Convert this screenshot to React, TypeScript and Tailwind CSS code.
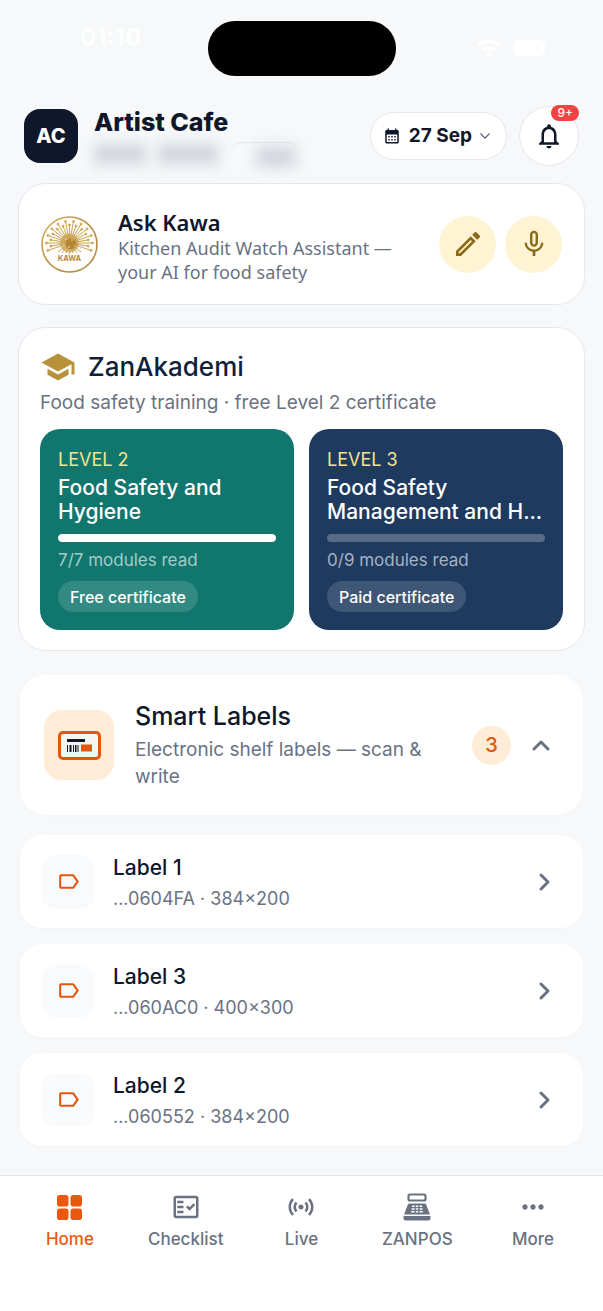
import React from "react";
import {
    MdCalendarMonth,
    MdMicNone,
    MdMoreHoriz,
    MdOutlineEdit,
    MdOutlineFactCheck,
    MdOutlineLabel,
    MdOutlineNotifications,
    MdSchool,
    MdSensors,
} from "react-icons/md";

type Course = {
    level: string;
    title: string;
    read: number;
    total: number;
    badge: string;
    bg: string;
    muted: string;
};

const courses: Course[] = [
    {
        level: "LEVEL 2",
        title: "Food Safety and Hygiene",
        read: 7,
        total: 7,
        badge: "Free certificate",
        bg: "bg-[#10766e]",
        muted: "text-[#a3ccc8]",
    },
    {
        level: "LEVEL 3",
        title: "Food Safety Management and H...",
        read: 0,
        total: 9,
        badge: "Paid certificate",
        bg: "bg-[#1e3a5f]",
        muted: "text-[#a5b1c1]",
    },
];

const labels = [
    { name: "Label 1", info: "...0604FA · 384×200" },
    { name: "Label 3", info: "...060AC0 · 400×300" },
    { name: "Label 2", info: "...060552 · 384×200" },
];

function Chevron({ className, d, width = 3 }: { className: string; d: string; width?: number }) {
    return (
        <svg
            className={className}
            viewBox="0 0 24 24"
            fill="none"
            stroke="currentColor"
            strokeWidth={width}
            strokeLinecap="round"
            strokeLinejoin="round"
            aria-hidden="true"
        >
            <path d={d} />
        </svg>
    );
}

function StatusBar() {
    return (
        <div className="relative flex h-24 justify-center pt-[21px]">
            <span className="absolute left-20 top-6 text-[24px] leading-7 font-bold text-white/80">
                01:10
            </span>
            <div className="h-[55px] w-[188px] rounded-[27px] bg-black" />
            <div className="absolute right-[58px] top-9 flex items-center gap-3 text-white">
                <svg className="h-6 w-6" viewBox="0 0 24 24" fill="none" stroke="currentColor" strokeWidth="4">
                    <path d="M1.500 9.500a15 15 0 0 1 21 0" />
                    <path d="M6 14.500a8.500 8.500 0 0 1 12 0" />
                    <path d="M8.500 18a5 5 0 0 1 7 0L12 22z" fill="currentColor" stroke="none" />
                </svg>
                <div className="h-4 w-8 rounded-md bg-white" />
            </div>
        </div>
    );
}

function KawaLogo() {
    const rays = Array.from({ length: 36 }, (_, i) => {
        const angle = (i * Math.PI * 2) / 36;
        const r = i % 2 ? 19 : 23;
        return {
            x: 28.5 + Math.cos(angle) * r,
            y: 27 + Math.sin(angle) * r * 0.95,
            down: Math.sin(angle) > 0.4,
        };
    }).filter((ray) => !ray.down);

    return (
        <svg className="size-[57px] shrink-0" viewBox="0 0 57 57" role="img" aria-label="Kawa">
            <defs>
                <linearGradient id="gold" x1="0" y1="0" x2="1" y2="1">
                    <stop offset="0" stopColor="#d9b45f" />
                    <stop offset="0.5" stopColor="#b98a3a" />
                    <stop offset="1" stopColor="#b58a4a" />
                </linearGradient>
            </defs>
            <circle cx="28.500" cy="28.500" r="27.500" fill="#fffefa" stroke="url(#gold)" strokeWidth="1.600" />
            <g stroke="#c9a253" strokeWidth="1" fill="#c9a253">
                {rays.map((ray, i) => (
                    <g key={i}>
                        <line x1="28.500" y1="27" x2={ray.x} y2={ray.y} />
                        <circle cx={ray.x} cy={ray.y} r="0.900" />
                    </g>
                ))}
                <path d="M28.500 27L17 36M28.500 27L21 37M28.500 27L25 37M28.500 27V38M28.500 27L32 37M28.500 27L36 37M28.500 27L40 36" />
            </g>
            <circle cx="28.500" cy="27" r="9.500" fill="#c9a253" opacity="0.750" />
            <circle cx="30" cy="28" r="5.500" fill="#b0822f" opacity="0.850" />
            <g fill="#f3dc9c">
                <circle cx="25" cy="23" r="0.800" />
                <circle cx="31" cy="24" r="0.800" />
                <circle cx="23" cy="29" r="0.800" />
                <circle cx="28" cy="31" r="0.800" />
                <circle cx="34" cy="30" r="0.700" />
            </g>
            <text x="28.500" y="44.500" textAnchor="middle" fontSize="7.500" fontWeight="700" fill="#b48a48">
                KAWA
            </text>
        </svg>
    );
}

function ShelfLabelIcon() {
    return (
        <svg className="h-[29px] w-[43px]" viewBox="0 0 43 29" aria-hidden="true">
            <rect x="1.500" y="1.500" width="40" height="26" rx="3.500" fill="#f4f4f1" stroke="#e2570f" strokeWidth="3" />
            <path d="M9 8h18v3H9z" fill="#111827" />
            <path d="M9 14h1v7H9zM11.500 14h2v7h-2zM15 14h1v7h-1zM17 14h1.500v7H17zM19.500 14h1v7h-1z" fill="#111827" />
            <path d="M23 13.500h11v7H23z" fill="#e2570f" />
        </svg>
    );
}

function RegisterIcon() {
    return (
        <svg className="size-7" viewBox="0 0 28 28" fill="currentColor" aria-hidden="true">
            <rect x="5.500" y="1.500" width="17" height="6" rx="1.500" fill="none" stroke="currentColor" strokeWidth="2.200" />
            <path d="M6.500 10.500h15c.8 0 1.300.4 1.600 1.100L27 21.500H1l3.900-9.900c.3-.7.800-1.100 1.600-1.100z" />
            <path d="M.5 23h27v2.500a2 2 0 0 1-2 2h-23a2 2 0 0 1-2-2z" />
            <path
                d="M9 12.500h2.500v1.500H9zM12.800 12.500h2.500v1.500h-2.500zM16.600 12.500h2.500v1.500h-2.500zM8.600 15.300h2.900v1.500H8.600zM12.800 15.300h2.500v1.500h-2.500zM16.600 15.300h2.900v1.500h-2.900zM8.200 18h3.300v1.500H8.200zM12.800 18h2.500v1.500h-2.500zM16.600 18h3.300v1.500h-3.300z"
                fill="#fff"
            />
        </svg>
    );
}

function HomeIcon() {
    return (
        <svg className="size-[25px]" viewBox="0 0 25 25" fill="currentColor" aria-hidden="true">
            <rect width="11.500" height="11.500" rx="2.800" />
            <rect x="13.500" width="11.500" height="11.500" rx="2.800" />
            <rect y="13.500" width="11.500" height="11.500" rx="2.800" />
            <rect x="13.500" y="13.500" width="11.500" height="11.500" rx="2.800" />
        </svg>
    );
}

function Header() {
    return (
        <header className="flex items-center px-6 pt-[10px]">
            <div className="flex size-[54px] shrink-0 items-center justify-center rounded-2xl bg-[#0f172a] text-[20px] font-extrabold text-white">
                AC
            </div>
            <div className="ml-4 min-w-0 flex-1">
                <h1 className="text-[25px] leading-8 font-extrabold text-[#0f172a]">Artist Cafe</h1>
                <div className="mt-1 flex h-6 items-center gap-3" aria-hidden="true">
                    <div className="h-5 w-13 bg-gray-300 blur-[7px]" />
                    <div className="h-5 w-15 bg-gray-300 blur-[7px]" />
                    <div className="flex h-6 w-[70px] justify-end rounded-xl border-t border-gray-200 pt-1">
                        <div className="mr-1 h-5 w-10 bg-gray-300 blur-[7px]" />
                    </div>
                </div>
            </div>
            <button className="flex h-12 items-center rounded-full border border-gray-200 bg-white pr-4 pl-3 text-[#0f172a]">
                <MdCalendarMonth className="size-[18px]" />
                <span className="ml-2 text-[19px] font-bold">27 Sep</span>
                <Chevron className="ml-2 size-[10px] text-gray-600" d="M2 7l10 10 10-10" />
            </button>
            <button
                aria-label="Notifications"
                className="relative ml-3 flex size-[60px] items-center justify-center rounded-full border border-gray-200 bg-white text-[#111827]"
            >
                <MdOutlineNotifications className="size-[30px]" />
                <span className="absolute -top-[2px] -right-px flex h-4 items-center rounded-full bg-[#ef4444] px-[6px] text-[12px] font-medium text-white">
                    9+
                </span>
            </button>
        </header>
    );
}

function AskKawa() {
    return (
        <section className="flex items-center rounded-[28px] border border-gray-200 bg-white px-[22px] py-5">
            <KawaLogo />
            <div className="ml-5 min-w-0 flex-1 pt-1 font-['Noto_Sans',sans-serif]">
                <h2 className="text-[22px] leading-7 font-semibold text-[#0f172a]">Ask Kawa</h2>
                <p className="text-[18px] leading-6 text-gray-500">
                    Kitchen Audit Watch Assistant —<br />
                    your AI for food safety
                </p>
            </div>
            <div className="flex gap-[9px] text-[#8a6a16]">
                <button aria-label="Write" className="flex size-[57px] items-center justify-center rounded-full bg-[#fef3d3]">
                    <MdOutlineEdit className="size-8" />
                </button>
                <button aria-label="Speak" className="flex size-[57px] items-center justify-center rounded-full bg-[#fef3d3]">
                    <MdMicNone className="size-8" />
                </button>
            </div>
        </section>
    );
}

function CourseCard({ level, title, read, total, badge, bg, muted }: Course) {
    return (
        <a href="#" className={`block min-w-0 rounded-[20px] p-[18px] ${bg}`}>
            <p className="text-[18px] leading-[26px] text-[#f5e58a]">{level}</p>
            <h3 className="mt-[3px] text-[21px] leading-6 font-medium text-white">{title}</h3>
            <div className="mt-[10px] h-2 overflow-hidden rounded-full bg-white/25">
                <div className="h-full rounded-full bg-white" style={{ width: `${(read / total) * 100}%` }} />
            </div>
            <p className={`mt-[6px] text-[17px] leading-6 ${muted}`}>
                {read}/{total} modules read
            </p>
            <span className="mt-[9px] inline-flex h-[31px] items-center rounded-full bg-white/15 px-3 text-[16px] font-medium text-white">
                {badge}
            </span>
        </a>
    );
}

function Akademi() {
    return (
        <section className="mt-[22px] rounded-[28px] border border-gray-200 bg-white px-[21px] pt-[21px] pb-5">
            <div className="flex items-center gap-3">
                <MdSchool className="size-9 text-[#b8923a]" />
                <h2 className="text-[26px] leading-9 font-medium text-[#0f1f3d]">ZanAkademi</h2>
            </div>
            <p className="mt-1 text-[19px] leading-7 text-gray-500">
                Food safety training · free Level 2 certificate
            </p>
            <div className="mt-3 grid grid-cols-2 gap-[15px]">
                {courses.map((course) => (
                    <CourseCard key={course.level} {...course} />
                ))}
            </div>
        </section>
    );
}

function SmartLabels() {
    return (
        <section className="mt-6 px-0.5">
            <button className="flex w-full items-center rounded-[26px] bg-white px-6 py-[25px] text-left shadow-[0_1px_4px_rgba(15,23,42,0.02)]">
                <span className="flex size-[70px] shrink-0 items-center justify-center rounded-[18px] bg-[#ffecd6]">
                    <ShelfLabelIcon />
                </span>
                <span className="ml-[21px] min-w-0 flex-1">
                    <span className="block text-[25px] leading-8 font-medium text-[#0f172a]">Smart Labels</span>
                    <span className="mt-1 block text-[19px] leading-[27px] text-gray-500">
                        Electronic shelf labels — scan &<br />
                        write
                    </span>
                </span>
                <span className="flex size-[39px] items-center justify-center rounded-full bg-[#ffecd6] text-[20px] font-medium text-[#e2570f]">
                    3
                </span>
                <Chevron className="mr-[6px] ml-[18px] size-6 text-gray-500" d="M5 16l7-7 7 7" />
            </button>
            <ul className="mt-5 flex flex-col gap-4">
                {labels.map((label) => (
                    <li key={label.name}>
                        <a
                            href="#"
                            className="flex items-center rounded-[22px] bg-white px-[21px] py-4 shadow-[0_1px_4px_rgba(15,23,42,0.02)]"
                        >
                            <span className="flex size-[54px] items-center justify-center rounded-2xl bg-[#f8fafc] text-[#e2570f]">
                                <MdOutlineLabel className="size-[25px]" />
                            </span>
                            <span className="ml-[18px] flex-1">
                                <span className="block text-[21px] leading-[34px] font-medium text-[#0f172a]">
                                    {label.name}
                                </span>
                                <span className="block text-[18px] leading-[27px] text-gray-500">{label.info}</span>
                            </span>
                            <Chevron className="mr-[6px] size-6 text-gray-500" d="M9 5l7 7-7 7" />
                        </a>
                    </li>
                ))}
            </ul>
        </section>
    );
}

const tabs = [
    { name: "Home", icon: <HomeIcon /> },
    { name: "Checklist", icon: <MdOutlineFactCheck className="size-[30px]" /> },
    { name: "Live", icon: <MdSensors className="size-[30px]" /> },
    { name: "ZANPOS", icon: <RegisterIcon /> },
    { name: "More", icon: <MdMoreHoriz className="size-8" /> },
];

function TabBar() {
    return (
        <nav className="mt-7 grid grid-cols-5 border-t border-gray-200 bg-white px-3 pt-[15px] pb-[60px]">
            {tabs.map((tab, i) => (
                <a
                    key={tab.name}
                    href="#"
                    className={`flex flex-col items-center gap-1 text-[17px] leading-6 font-medium ${
                        i === 0 ? "text-[#ea580c]" : "text-gray-500"
                    }`}
                >
                    <span className="flex h-8 items-center">{tab.icon}</span>
                    {tab.name}
                </a>
            ))}
        </nav>
    );
}

export default function App() {
    return (
        <div className="flex min-h-screen flex-col bg-[#f6f8fa] font-['Inter',sans-serif]">
            <StatusBar />
            <Header />
            <main className="flex-1 px-[18px] pt-[17px]">
                <AskKawa />
                <Akademi />
                <SmartLabels />
            </main>
            <TabBar />
        </div>
    );
}
